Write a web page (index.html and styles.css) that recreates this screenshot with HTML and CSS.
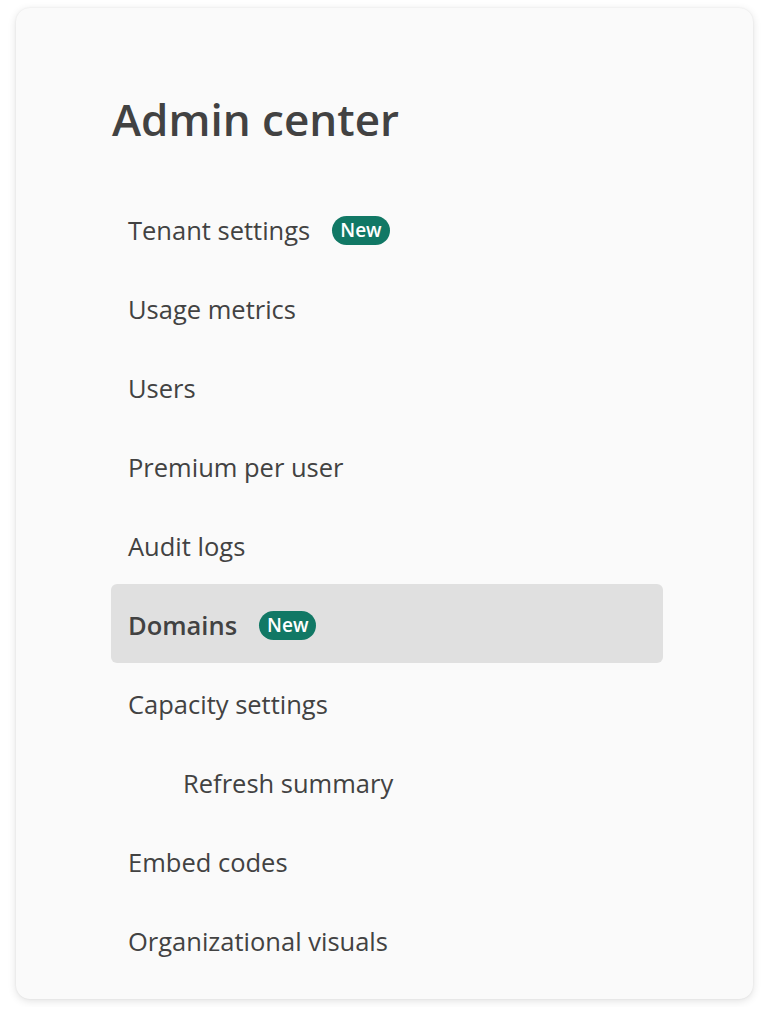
FILE: index.html
```html
<!DOCTYPE html>
<html lang="en">
<head>
  <meta charset="UTF-8" />
  <meta name="viewport" content="width=device-width, initial-scale=1.0" />
  <title>Admin center</title>
  <link rel="stylesheet" href="styles.css">
</head>
<body>
  <div class="panel">
    <h1>Admin center</h1>

    <ul class="nav">
      <li class="nav-item">Tenant settings <span class="badge">New</span></li>
      <li class="nav-item">Usage metrics</li>
      <li class="nav-item">Users</li>
      <li class="nav-item">Premium per user</li>
      <li class="nav-item">Audit logs</li>
      <li class="nav-item active">Domains <span class="badge">New</span></li>
      <li class="nav-item">Capacity settings</li>
      <li class="nav-item sub">Refresh summary</li>
      <li class="nav-item">Embed codes</li>
      <li class="nav-item">Organizational visuals</li>
    </ul>
  </div>
</body>
</html>
```

FILE: styles.css
```css
body {
  margin: 0;
  padding: 8px 16px;
  background: #fff;
  font-family: "Open Sans", "Noto Sans", sans-serif;
  color: #424242;
}
.panel {
  width: 737px;
  height: 991px;
  box-sizing: border-box;
  padding: 83px 90px 0 95px;
  background: #fafafa;
  border-radius: 14px;
  box-shadow: 0 2px 8px rgba(0, 0, 0, 0.12), 0 0 2px rgba(0, 0, 0, 0.08);
}
h1 {
  margin: 0 0 0 1px;
  font-size: 44px;
  font-weight: 600;
  line-height: 56px;
}
.nav {
  list-style: none;
  margin: 42px 0 0;
  padding: 0;
}
.nav-item {
  display: flex;
  align-items: center;
  gap: 22px;
  height: 79px;
  box-sizing: border-box;
  padding: 3px 0 0 17px;
  font-size: 25.5px;
  border-radius: 6px;
}
.nav-item.active {
  background: #e0e0e0;
  font-weight: 600;
}
.nav-item.sub {
  padding-left: 72px;
}
.badge {
  display: inline-block;
  padding: 0 8px;
  height: 29px;
  line-height: 29px;
  border-radius: 15px;
  background: #117865;
  color: #fff;
  font-size: 19px;
  font-weight: 600;
}
```
